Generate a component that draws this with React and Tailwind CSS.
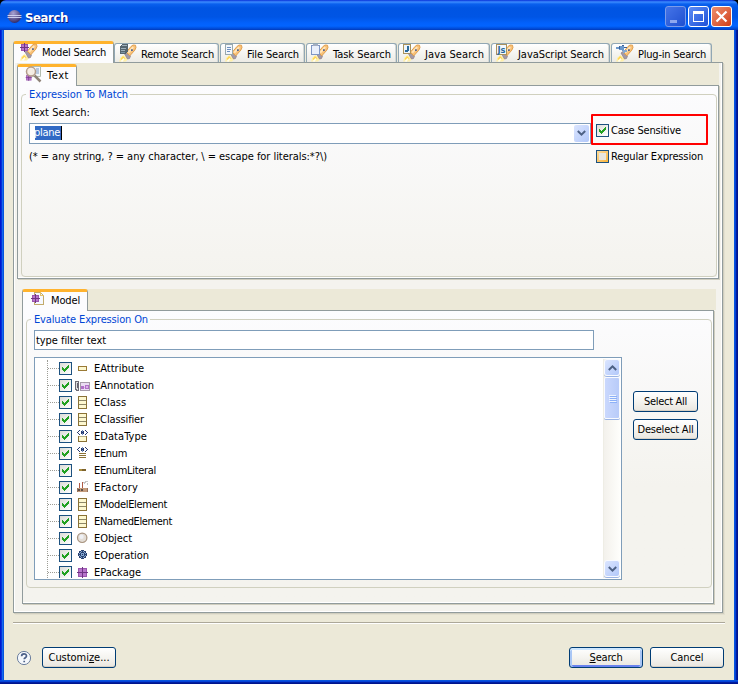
import React, { useState } from "react";

// Search page tabs, widths follow the label lengths
const searchTabs = [
  { id: "model", title: "Model Search", width: "w-[101px]", textWidth: 64 },
  { id: "remote", title: "Remote Search", width: "w-[105px]", textWidth: 73 },
  { id: "file", title: "File Search", width: "w-[85px]", textWidth: 52 },
  { id: "task", title: "Task Search", width: "w-[91px]", textWidth: 58 },
  { id: "java", title: "Java Search", width: "w-[92px]", textWidth: 59 },
  { id: "js", title: "JavaScript Search", width: "w-[119px]", textWidth: 86 },
  { id: "plugin", title: "Plug-in Search", width: "w-[101px]", textWidth: 68 },
];

const modelElements = [
  { name: "EAttribute", icon: "attribute", textWidth: 50 },
  { name: "EAnnotation", icon: "annotation", textWidth: 60 },
  { name: "EClass", icon: "class", textWidth: 32 },
  { name: "EClassifier", icon: "class", textWidth: 50 },
  { name: "EDataType", icon: "datatype", textWidth: 53 },
  { name: "EEnum", icon: "enum", textWidth: 33 },
  { name: "EEnumLiteral", icon: "literal", textWidth: 62 },
  { name: "EFactory", icon: "factory", textWidth: 44 },
  { name: "EModelElement", icon: "class", textWidth: 73 },
  { name: "ENamedElement", icon: "class", textWidth: 78 },
  { name: "EObject", icon: "object", textWidth: 38 },
  { name: "EOperation", icon: "operation", textWidth: 55 },
  { name: "EPackage", icon: "package", textWidth: 47 },
];

// Label squeezed or stretched to a fixed width
function Label({ children, width, className = "" }) {
  const ref = React.useRef(null);

  React.useLayoutEffect(() => {
    const el = ref.current;
    const count = el.textContent.length;
    el.style.letterSpacing = "0px";
    const natural = el.getBoundingClientRect().width;
    el.style.letterSpacing = `${(width - natural) / count}px`;
  }, [width]);

  return (
    <span ref={ref} className={`inline-block whitespace-pre leading-[14px] ${className}`}>
      {children}
    </span>
  );
}

function PackageGlyph() {
  return (
    <g>
      <path d="M1 1h9v9h-9z" fill="#9a55ae" />
      <path d="M2 2h3v3h-3zM6 2h3v3h-3zM2 6h3v3h-3zM6 6h3v3h-3z" fill="#b874cb" />
      <path d="M5 0h1v11h-1zM0 5h11v1h-11z" fill="#6f3584" />
    </g>
  );
}

function Flashlight() {
  return (
    <g shapeRendering="auto">
      <path d="M0 17.500 1.500 13.500 4.500 11 9 15 7 17.500z" fill="#fff0a8" />
      <path d="M1.500 15 4 12 6.500 14.500 3.500 16.500z" fill="#ffd452" />
      <path d="M2.500 17.500 5 14.500" stroke="#fffdf0" strokeWidth="1.800" />
      <path d="M5 9 7 7.500 11.500 12 10.500 14.500 8.500 15z" fill="#a39aa6" stroke="#8b7d86" strokeWidth=".7" />
      <path d="M7.200 8.300 12 2.500 14 1 16.500 1.200 17 3.500 15.800 6.200 10.800 11.800z" fill="#f9c27a" stroke="#dd9a45" strokeWidth=".9" />
      <path d="M9.200 8.700 14.200 3.200" stroke="#ffe6bb" strokeWidth="2" />
      <path d="M12 5.200h1.800v1.800h-1.800z" fill="#56648c" />
    </g>
  );
}

function TabIcon({ type }) {
  return (
    <svg width="18" height="18" viewBox="0 0 18 18" shapeRendering="crispEdges" className="shrink-0">
      {type !== "text" && type !== "modelFile" && <Flashlight />}
      {type === "model" && (
        <g transform="scale(.82)">
          <PackageGlyph />
        </g>
      )}
      {type === "remote" && (
        <g>
          <path d="M1 2 3 0h6v7l-3 3h-5z" fill="#56656f" />
          <path d="M3 1h5v1h-5zM2 4h5v1h-5zM2 6h4v1h-4z" fill="#9fb0bb" />
          <path d="M2 8h4v1h-4z" fill="#7c93a5" />
        </g>
      )}
      {type === "file" && (
        <g>
          <path d="M.5.5h7v10h-7z" fill="#f3f7fc" stroke="#9aa9ac" />
          <path d="M2 3h4v1h-4zM2 5h4v1h-4zM2 7h3v1h-3z" fill="#6d8fc0" />
        </g>
      )}
      {type === "task" && (
        <g>
          <path d="M.5 1.500h8v9h-8z" fill="#e9effb" stroke="#7f96c4" />
          <path d="M2 0h5v2h-5z" fill="#a3aec2" />
        </g>
      )}
      {type === "java" && (
        <g>
          <path d="M.5.5h7v9h-7z" fill="#eef5fb" stroke="#a9925c" />
          <path d="M4 2h2v5h-1v1h-3v-2h2z" fill="#2a6a9c" />
        </g>
      )}
      {type === "js" && (
        <g>
          <path d="M.5.5h10v10h-10z" fill="#f4f8fd" stroke="#a9925c" />
          <text
            x="1.500"
            y="8.500"
            fontSize="8"
            fontWeight="bold"
            fill="#2a6a9c"
            textLength="8"
            lengthAdjust="spacingAndGlyphs"
          >
            Js
          </text>
        </g>
      )}
      {type === "plugin" && (
        <g>
          <path d="M0 3h3v-1h3v-1h2v2h3v1h-3v3h-2v-1h-3v-1h-3z" fill="#6b98cc" />
          <path d="M3 2h1v3h-1zM6 1h2v1h-2zM8 3h3v1h-3z" fill="#3d6298" />
          <path d="M7 6h4v2h-2v1h-2z" fill="#86a9d2" />
        </g>
      )}
      {type === "text" && (
        <g shapeRendering="auto">
          <path d="M7.500.5h8v10h-8z" fill="#f2f6fb" stroke="#b3bcae" />
          <path d="M11 3h3M11 5h3M11 7h3" stroke="#7d9bc6" />
          <g transform="translate(.5 8.500) scale(.6)">
            <PackageGlyph />
          </g>
          <path d="M9.500 9.500 15.500 15.500" stroke="#8f8378" strokeWidth="2.500" />
          <circle cx="6" cy="5.600" r="4.500" fill="#f6ede4" fillOpacity=".95" stroke="#b39c8a" strokeWidth="1.500" />
        </g>
      )}
      {type === "modelFile" && (
        <g>
          <path d="M3.500 1.500h6l3 3v9h-9z" fill="#f5f8ff" stroke="#c2ab6c" />
          <path d="M9 1h1v3h3v1h-4z" fill="#e4c26a" />
          <g transform="translate(0 3) scale(.82)">
            <PackageGlyph />
          </g>
        </g>
      )}
    </svg>
  );
}

function ElementIcon({ type }) {
  return (
    <svg width="16" height="16" viewBox="0 0 16 16" shapeRendering="crispEdges" className="shrink-0">
      {type === "attribute" && <path d="M3.500 6.500h8v4h-8z" fill="#fdf8d0" stroke="#9a7a35" />}
      {type === "annotation" && (
        <g>
          <path d="M5 5h10v9h-10z" fill="#a59ba8" />
          <path d="M6 6h8v7h-8z" fill="#eadcf3" />
          <path d="M6 9h3v3h-3zM10 8h4v4h-4z" fill="#b070c8" />
          <path d="M9 10h1v1h-1zM11 9h2v2h-2z" fill="#dcb0e8" />
          <path d="M.5 5v7l1 1h2v-8l-1-1h-1z" fill="#dedede" stroke="#6f6b75" />
          <path d="M2 6h1v5h-1z" fill="#65616c" />
        </g>
      )}
      {type === "class" && (
        <g>
          <path d="M3.500 2.500h8v12h-8z" fill="#fdf8d0" stroke="#8a7236" />
          <path d="M4 6h7v1h-7zM4 10h7v1h-7z" fill="#8d8768" />
        </g>
      )}
      {(type === "datatype" || type === "enum") && (
        <g fill="#25386f">
          <path d="M4 2h1v1h-1zM3 3h1v1h-1zM2 4h1v1h-1zM3 5h1v1h-1zM4 6h1v1h-1zM10 2h1v1h-1zM11 3h1v1h-1zM12 4h1v1h-1zM11 5h1v1h-1zM10 6h1v1h-1z" />
          <path d="M6 3h3v3h-3z" />
          <path d="M7 2h1v5h-1z" fill="#6d8dbb" />
          <path d="M7 4h1v1h-1z" fill="#25386f" />
        </g>
      )}
      {type === "datatype" && (
        <g>
          <path d="M3.500 8.500h8v5h-8z" fill="#fdf8d0" stroke="#8a7236" />
          <path d="M4 8h7v1h-7z" fill="#b8b08a" />
        </g>
      )}
      {type === "enum" && <path d="M4 8h7v1h-7zM4 10h7v1h-7zM4 12h7v1h-7z" fill="#8a7236" />}
      {type === "literal" && (
        <g>
          <path d="M4 7h3v2h-3z" fill="#a98c3c" />
          <path d="M7 7h4v2h-4z" fill="#7d622c" />
        </g>
      )}
      {type === "factory" && (
        <g>
          <path d="M2 9h2v-5h1v5h2v-6h1v6h5v4h-11z" fill="#96735c" />
          <path d="M3 9h9v4h-9z" fill="#c49c7c" />
          <path d="M3 10h2v2h-2zM6 10h2v2h-2z" fill="#5f5048" />
          <path d="M8 3h2v-1h3v1h-2v1h-1v1h-1v-1h-1zM12 4h1v2h-1z" fill="#c4c4c4" />
          <path d="M4 4h1v5h-1zM7 3h1v6h-1z" fill="#b05a44" />
        </g>
      )}
      {type === "object" && (
        <g shapeRendering="auto">
          <circle cx="7.200" cy="7.800" r="4.700" fill="#e3ddd6" stroke="#a8947f" strokeWidth="1.200" />
          <circle cx="6.500" cy="6.800" r="2.200" fill="#eef0f4" />
        </g>
      )}
      {type === "operation" && (
        <g>
          <path d="M6 3h3v1h2v2h1v3h-1v2h-2v1h-3v-1h-2v-2h-1v-3h1v-2h2z" fill="#2a4270" />
          <path d="M6 4h1v1h-1zM8 4h1v1h-1zM4 6h1v1h-1zM4 8h1v1h-1zM10 6h1v1h-1zM10 8h1v1h-1zM6 10h1v1h-1zM8 10h1v1h-1zM6 6h3v3h-3zM5 5h1v1h-1zM9 5h1v1h-1zM5 9h1v1h-1zM9 9h1v1h-1z" fill="#84a6d0" />
          <path d="M7 7h1v1h-1z" fill="#20355f" />
        </g>
      )}
      {type === "package" && (
        <g transform="translate(2 3)">
          <PackageGlyph />
        </g>
      )}
    </svg>
  );
}

function CheckBox({ checked, hot, onClick }) {
  return (
    <button
      onClick={onClick}
      className={`flex h-[13px] w-[13px] shrink-0 items-center justify-center border border-[#1c5180] ${
        hot ? "bg-linear-to-br from-[#fddc9a] to-[#f8b436]" : "bg-linear-to-br from-[#dcdcd7] to-white"
      }`}
    >
      {hot && !checked && <span className="h-[7px] w-[7px] bg-[#e8e6df]" />}
      {checked && (
        <svg width="7" height="7" viewBox="0 0 7 7" shapeRendering="crispEdges">
          <path d="M0 2h1v1h1v1h1v-1h1v-1h1v-1h1v-1h1v3h-1v1h-1v1h-1v1h-1v1h-1v-1h-1v-1h-1z" fill="#21a121" />
        </svg>
      )}
    </button>
  );
}

function XpButton({ children, className = "", isDefault }) {
  return (
    <button
      className={`flex h-[21px] items-center justify-center rounded-[3px] border border-[#003c74] bg-linear-to-b from-white via-[#f5f4f0] to-[#e9e6df] ${
        isDefault
          ? "shadow-[inset_0_2px_0_#cee7ff,inset_2px_0_0_#a9c6f5,inset_-2px_0_0_#a9c6f5,inset_0_-2px_0_#6982ee]"
          : "shadow-[inset_0_-1px_0_#d6d0c5]"
      } ${className}`}
    >
      <span className="mt-px flex">{children}</span>
    </button>
  );
}

function GroupBox({ title, titleWidth, className = "", children }) {
  return (
    <div className={`rounded-[4px] border border-[#d0d0bf] ${className}`}>
      <div className="ml-[4px] flex h-0 items-center">
        <Label width={titleWidth + 5} className="bg-[#fbfbfd] pl-[3px] pr-[2px] text-[#0046d5]">
          {title}
        </Label>
      </div>
      {children}
    </div>
  );
}

function ScrollButton({ down }) {
  return (
    <div className="flex h-[17px] w-[16px] items-center justify-center rounded-[3px] border border-[#f8faff] bg-linear-to-br from-[#dbe5fe] to-[#b2c8fa] shadow-[0_1px_0_#9bb4e4]">
      <svg width="9" height="6" viewBox="0 0 9 6" className={down ? "rotate-180" : ""}>
        <path d="M.8 5 4.500 1.400 8.200 5" fill="none" stroke="#4d6185" strokeWidth="2" />
      </svg>
    </div>
  );
}

function TitleBar() {
  return (
    <div className="flex h-[30px] shrink-0 items-center rounded-t-[6px] bg-[linear-gradient(to_bottom,#0831d9_0px,#3c8cff_2px,#0a60ee_4px,#0054e3_8px,#0055e5_17px,#0261fb_23px,#0264ff_26px,#0047d0_29px,#0238b8_30px)] pl-[7px] pr-[6px]">
      <svg width="15" height="15" viewBox="0 0 15 15" className="mt-[2px]">
        <defs>
          <radialGradient id="eclipse" cx=".4" cy=".25" r=".8">
            <stop offset="0" stopColor="#a9a3d4" />
            <stop offset="1" stopColor="#2c2462" />
          </radialGradient>
        </defs>
        <circle cx="7.500" cy="7.500" r="6.500" fill="url(#eclipse)" />
        <path d="M.5 6.500h14M.5 8.500h14" stroke="#d5d8f4" strokeWidth=".9" />
      </svg>
      <Label
        width={43}
        className="ml-[3px] mt-[5px] font-['DejaVu_Sans_Condensed','DejaVu_Sans',sans-serif] text-[13px] font-bold text-white [text-shadow:1px_1px_0_#0a1883]"
      >
        Search
      </Label>
      <div className="ml-auto mt-[3px] flex gap-[2px]">
        <div className="h-[21px] w-[21px] rounded-[3px] border border-[#7b9bea] bg-linear-to-br from-[#4574e8] to-[#1f4fd0] pl-[4px] pt-[13px]">
          <div className="h-[3px] w-[7px] bg-[#8ea8ef]" />
        </div>
        <div className="h-[21px] w-[21px] rounded-[3px] border border-white bg-linear-to-br from-[#5d8cf4] to-[#1f4fd8] pl-[4px] pt-[4px]">
          <div className="h-[11px] w-[11px] border border-t-[3px] border-white" />
        </div>
        <div className="flex h-[21px] w-[21px] items-center justify-center rounded-[3px] border border-white bg-linear-to-br from-[#ee8e6c] to-[#d03c13]">
          <svg width="13" height="13" viewBox="0 0 13 13">
            <path d="M1.500 1.500 11.500 11.500M11.500 1.500 1.500 11.500" stroke="#fff" strokeWidth="2.200" />
          </svg>
        </div>
      </div>
    </div>
  );
}

function SearchTab({ tab, active, onClick }) {
  if (active) {
    return (
      <button
        onClick={onClick}
        className={`relative z-10 -mb-px flex h-[22px] items-start rounded-t-[3px] border-x border-t-[3px] border-x-[#919b9c] border-t-[#ffb32e] bg-[#fcfcfe] pl-[6px] ${tab.width}`}
      >
        <span className="-mt-[1px] flex">
          <TabIcon type={tab.id} />
        </span>
        <Label width={tab.textWidth} className="ml-[4px] mt-[2px]">
          {tab.title}
        </Label>
      </button>
    );
  }
  return (
    <button
      onClick={onClick}
      className={`flex h-[19px] items-start rounded-t-[3px] border border-b-0 border-[#91a7b4] bg-linear-to-b from-white to-[#ecebe5] pl-[4px] shadow-[inset_-1px_0_0_#d5d8d4] ${tab.width}`}
    >
      <TabIcon type={tab.id} />
      <Label width={tab.textWidth} className="ml-[4px] mt-[4px]">
        {tab.title}
      </Label>
    </button>
  );
}

function ModelTree({ checked, onToggle }) {
  return (
    <div className="flex h-[223px] w-[588px] overflow-hidden border border-[#7f9db9] bg-white p-px">
      <div className="ml-[11px] mt-px flex-1 overflow-hidden border-l border-dotted border-[#9d9d96]">
        {modelElements.map(({ name, icon, textWidth }) => (
          <div key={name} className="flex h-[17px] items-center">
            <span className="w-[11px] border-t border-dotted border-[#9d9d96]" />
            <CheckBox checked={checked.includes(name)} onClick={() => onToggle(name)} />
            <span className="mb-[2px] ml-[3px] flex">
              <ElementIcon type={icon} />
            </span>
            <Label width={textWidth} className="ml-[3px]">
              {name}
            </Label>
          </div>
        ))}
      </div>
      {/* Scrollbar */}
      <div className="flex w-[17px] flex-col items-center border-l border-[#eeede5] bg-linear-to-r from-[#f3f1ec] to-[#fefefb]">
        <ScrollButton />
        <div className="mt-px flex h-[42px] w-[16px] flex-col items-center justify-center gap-px rounded-[2px] border border-[#f8faff] bg-linear-to-r from-[#cad8fd] to-[#b8cbf9] shadow-[0_1px_0_#9bb4e4]">
          <span className="h-px w-[7px] bg-[#eef4fe] shadow-[1px_1px_0_#8cb0f8]" />
          <span className="h-px w-[7px] bg-[#eef4fe] shadow-[1px_1px_0_#8cb0f8]" />
          <span className="h-px w-[7px] bg-[#eef4fe] shadow-[1px_1px_0_#8cb0f8]" />
          <span className="h-px w-[7px] bg-[#eef4fe] shadow-[1px_1px_0_#8cb0f8]" />
        </div>
        <div className="mt-auto mb-px">
          <ScrollButton down />
        </div>
      </div>
    </div>
  );
}

function App() {
  const [activeTab, setActiveTab] = useState("model");
  const [caseSensitive, setCaseSensitive] = useState(true);
  const [regex, setRegex] = useState(false);
  const [checked, setChecked] = useState(modelElements.map((e) => e.name));

  const handleToggle = (name) => {
    setChecked(
      checked.includes(name) ? checked.filter((n) => n !== name) : [...checked, name]
    );
  };

  return (
    <div className="flex h-[684px] w-[738px] flex-col overflow-hidden bg-black font-['DejaVu_Sans_Condensed','DejaVu_Sans',sans-serif] text-[11px] text-black">
      <TitleBar />
      <div className="flex h-[650px]">
        <div className="w-[4px] bg-[linear-gradient(to_right,#0019cf_0_1px,#0831d9_1px_2px,#166aee_2px_3px,#0855dd_3px_4px)]" />
        <div className="flex w-[730px] flex-col bg-[#ece9d8] pl-[9px] pt-[11px]">
          {/* Search pages */}
          <div className="flex h-[21px] items-end">
            {searchTabs.map((tab, i) => (
              <div key={tab.id} className={`flex ${i > 1 ? "ml-px" : ""}`}>
                <SearchTab
                  tab={tab}
                  active={tab.id === activeTab}
                  onClick={() => setActiveTab(tab.id)}
                />
              </div>
            ))}
          </div>

          <div className="h-[551px] w-[710px] shrink-0 border border-[#919b9c] bg-[#f4f3ee] pl-[3px] shadow-[inset_1px_0_0_#fff,inset_-1px_-1px_0_#fff,1px_1px_0_#d0cebf,2px_2px_0_#e3e0d0]">
            {/* Text tab */}
            <div className="flex h-[22px] w-[702px] items-end bg-[#ece9d8]">
              <div className="relative z-10 -mb-px flex h-[22px] w-[60px] items-start rounded-t-[3px] border-x border-t-[3px] border-x-[#919b9c] border-t-[#ffb32e] bg-[#fcfcfe] pl-[7px]">
                <span className="-mt-[1px] flex">
                  <TabIcon type="text" />
                </span>
                <Label width={22} className="ml-[4px] mt-[2px]">
                  Text
                </Label>
              </div>
            </div>
            <div className="h-[194px] w-[702px] border border-[#919b9c] bg-linear-to-b from-[#fcfcfe] to-[#f4f3ee] pl-[3px] pt-[8px] shadow-[inset_-1px_-1px_0_#fff,1px_1px_0_#d0cebf]">
              <GroupBox title="Expression To Match" titleWidth={99} className="h-[183px] w-[696px]">
                <div className="flex pl-[7px]">
                  <div className="w-[562px] pt-[10px]">
                    <Label width={61}>Text Search:</Label>
                    <div className="mt-[1px] flex h-[21px] items-center justify-between border border-[#7f9db9] bg-white pl-[5px] pr-px">
                      <span className="flex h-[14px] items-center overflow-hidden border-r border-black bg-[#316ac5] text-white">
                        <Label width={26} className="-ml-px mr-px">
                          plane
                        </Label>
                      </span>
                      <span className="flex h-[17px] w-[15px] items-center justify-center rounded-[2px] bg-linear-to-br from-[#dbe5fe] to-[#b2c8fa]">
                        <svg width="9" height="6" viewBox="0 0 9 6">
                          <path d="M.8 1 4.500 4.600 8.200 1" fill="none" stroke="#4d6185" strokeWidth="2" />
                        </svg>
                      </span>
                    </div>
                    <Label width={298} className="mt-[6px]">
                      {"(* = any string, ? = any character, \\ = escape for literals:*?\\)"}
                    </Label>
                  </div>
                  <div className="pt-[19px]">
                    <div className="flex h-[31px] w-[117px] items-start gap-[2px] rounded-[1px] border-2 border-[#f00] pl-[3px] pt-[8px]">
                      <CheckBox checked={caseSensitive} onClick={() => setCaseSensitive(!caseSensitive)} />
                      <Label width={70}>Case Sensitive</Label>
                    </div>
                    <div className="mt-[5px] flex items-start gap-[2px] pl-[5px]">
                      <CheckBox hot checked={regex} onClick={() => setRegex(!regex)} />
                      <Label width={92}>Regular Expression</Label>
                    </div>
                  </div>
                </div>
              </GroupBox>
            </div>

            {/* Model tab */}
            <div className="ml-[5px] mt-[10px] flex h-[21px] w-[694px] items-end bg-[#ece9d8]">
              <div className="relative z-10 -mb-px flex h-[22px] w-[66px] items-start rounded-t-[3px] border-x border-t-[3px] border-x-[#919b9c] border-t-[#ffb32e] bg-[#fcfcfe] pl-[8px]">
                <span className="-mt-[1px] flex">
                  <TabIcon type="modelFile" />
                </span>
                <Label width={29} className="ml-[2px] mt-[2px]">
                  Model
                </Label>
              </div>
            </div>
            <div className="ml-[5px] h-[294px] w-[692px] border border-[#919b9c] bg-linear-to-b from-[#fcfcfe] to-[#f4f3ee] to-60% pl-[3px] pt-[8px] shadow-[inset_-1px_-1px_0_#fff,1px_1px_0_#d0cebf]">
              <GroupBox title="Evaluate Expression On" titleWidth={114} className="h-[269px] w-[686px]">
                <div className="pl-[7px] pt-[10px]">
                  <div className="flex h-[20px] w-[560px] items-center border border-[#7f9db9] bg-white pl-[1px]">
                    <Label width={70} className="mt-px">
                      type filter text
                    </Label>
                  </div>
                  <div className="mt-[7px] flex gap-[11px]">
                    <ModelTree checked={checked} onToggle={handleToggle} />
                    <div className="flex flex-col gap-[7px] pt-[34px]">
                      <XpButton className="w-[65px]">
                        <Label width={43}>Select All</Label>
                      </XpButton>
                      <XpButton className="w-[65px]">
                        <Label width={56}>Deselect All</Label>
                      </XpButton>
                    </div>
                  </div>
                </div>
              </GroupBox>
            </div>
          </div>

          {/* Footer */}
          <div className="mt-[9px] h-[2px] w-[712px] border-t border-[#aca899] bg-white" />
          <div className="mt-[23px] flex w-[711px] items-center">
            <svg width="16" height="16" viewBox="0 0 16 16" className="ml-[3px]">
              <circle cx="8" cy="8" r="6.600" fill="#f5f8fc" stroke="#6c7f9e" />
              <path d="M5.600 6.300c0-3.200 4.900-3.100 4.900-.3 0 1.700-2.300 1.700-2.300 3.200M8.200 10.700v1.600" fill="none" stroke="#4c6088" strokeWidth="1.700" />
            </svg>
            <XpButton className="ml-[10px] w-[74px]">
              <Label width={61}>
                Customi<span className="underline underline-offset-1">z</span>e...
              </Label>
            </XpButton>
            <XpButton className="ml-auto w-[74px]" isDefault>
              <Label width={33}>
                <span className="underline underline-offset-1">S</span>earch
              </Label>
            </XpButton>
            <XpButton className="ml-[7px] w-[74px]">
              <Label width={33}>Cancel</Label>
            </XpButton>
          </div>
        </div>
        <div className="w-[4px] bg-[linear-gradient(to_right,#0855dd_0_1px,#0441d8_1px_2px,#001ea0_2px_3px,#00138c_3px_4px)]" />
      </div>
      <div className="h-[4px] bg-[linear-gradient(to_bottom,#0855dd_0_1px,#0441d8_1px_2px,#001ea0_2px_3px,#00138c_3px_4px)]" />
    </div>
  );
}

export default App;
